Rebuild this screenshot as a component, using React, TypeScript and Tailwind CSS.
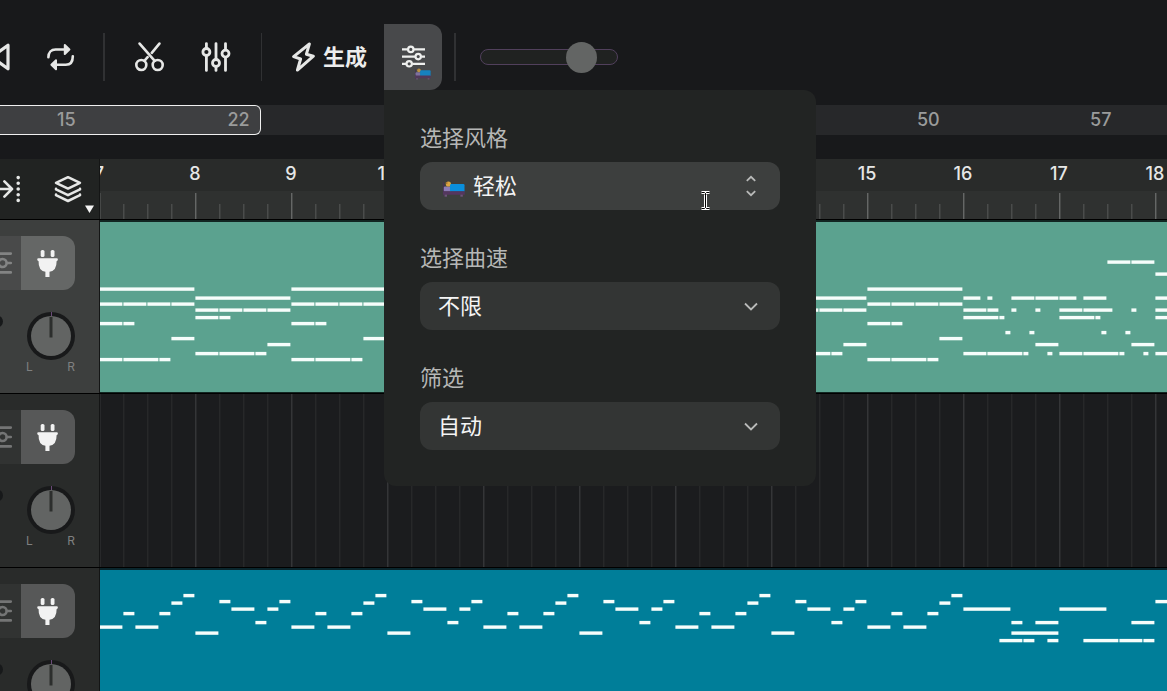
import type { ReactNode } from "react";

type Note = [row: number, start: number, end: number];

const BAR = 96;
const BEATS = [0, 24, 48, 72];

const quarters = (y: number): Note[] => BEATS.map((b) => [y, b, b + 23]);

const barA: Note[] = [
  [69, 0, 95],
  ...quarters(84),
  [103.5, 0, 23], [103.5, 24, 35],
  [118.5, 72, 95],
  [139.5, 0, 23], [139.5, 24, 59], [139.5, 60, 71],
];

const barB: Note[] = [
  [78, 0, 95],
  ...quarters(90),
  [97.5, 0, 23], [97.5, 24, 35],
  [124.5, 72, 95],
  [133.5, 0, 23], [133.5, 24, 59], [133.5, 60, 71],
];

const barC: Note[] = [
  [78, 0, 17], [78, 24, 29], [78, 48, 71], [78, 72, 95],
  [90, 0, 23], [90, 24, 35], [90, 48, 53], [90, 72, 77],
  [97.5, 0, 35], [97.5, 36, 41],
  [112.5, 42, 47], [112.5, 66, 71],
  [124.5, 72, 95],
  [133.5, 0, 23], [133.5, 24, 59], [133.5, 60, 65], [133.5, 84, 89],
];

const barD: Note[] = [
  [42, 48, 71], [42, 72, 95],
  [78, 0, 17], [78, 24, 47],
  [90, 0, 23], [90, 24, 53], [90, 72, 77],
  [97.5, 0, 35], [97.5, 36, 41],
  [112.5, 42, 47], [112.5, 66, 71],
  [124.5, 72, 95],
  [133.5, 0, 23], [133.5, 24, 59], [133.5, 60, 65], [133.5, 84, 89],
];

const barE: Note[] = [[54, 0, 23], [78, 0, 95], [90, 0, 23], [97.5, 0, 23], [133.5, 0, 23]];

const melodyA: Note[] = [
  [59, 0, 23], [45.5, 24, 35], [59, 36, 59], [45.5, 60, 71], [35, 72, 83], [27.5, 84, 95],
];
const melodyB: Note[] = [
  [65, 0, 23], [33.5, 24, 35], [41, 36, 59], [54.5, 60, 71], [41, 72, 83], [33.5, 84, 95],
];
const melodyC: Note[] = [
  [41, 0, 47],
  [54.5, 48, 59], [54.5, 72, 95],
  [65, 48, 95],
  [72.5, 36, 59], [72.5, 60, 71], [72.5, 84, 95],
];
const melodyD: Note[] = [
  [41, 0, 47], [54.5, 72, 95], [72.5, 24, 59], [72.5, 60, 83], [72.5, 84, 95],
];
const melodyE: Note[] = [[33.5, 0, 23]];

const chordBars = [barA, barB, barA, barB, barA, barB, barA, barB, barA, barC, barD, barE];
const melodyBars = [
  melodyA, melodyB, melodyA, melodyB, melodyA, melodyB, melodyA, melodyB, melodyA,
  melodyC, melodyD, melodyE,
];

function Clip({ bars, color }: { bars: Note[][]; color: string }) {
  return (
    <div className={`h-[170px] overflow-hidden ${color}`}>
      <svg className="block h-full w-full" aria-hidden="true">
        {bars.map((bar, i) =>
          bar.map(([y, start, end], j) => (
            <rect key={`${i}-${j}`} x={i * BAR + start - 0.6} y={y - 3.6} width={end - start} height="3.4" fill="#f6fdfb" />
          )),
        )}
      </svg>
    </div>
  );
}

function LaneGrid() {
  return (
    <svg className="block h-full w-full" aria-hidden="true">
      <defs>
        <pattern id="lane-grid" x="-1" width="96" height="8" patternUnits="userSpaceOnUse">
          <rect x="0" width="1" height="8" fill="#343537" />
          <rect x="1" width="1" height="8" fill="#27282a" />
          <rect x="24" width="1" height="8" fill="#272829" />
          <rect x="25" width="1" height="8" fill="#202123" />
          <rect x="48" width="1" height="8" fill="#272829" />
          <rect x="49" width="1" height="8" fill="#202123" />
          <rect x="72" width="1" height="8" fill="#272829" />
          <rect x="73" width="1" height="8" fill="#202123" />
        </pattern>
      </defs>
      <rect width="100%" height="100%" fill="url(#lane-grid)" />
    </svg>
  );
}

function RulerTicks() {
  return (
    <svg className="block h-7 w-full" aria-hidden="true">
      <defs>
        <pattern id="ruler-ticks" x="-1" width="96" height="28" patternUnits="userSpaceOnUse">
          <rect x="0" y="2" width="1" height="26" fill="#656766" />
          <rect x="1" y="2" width="1" height="26" fill="#464847" />
          <rect x="24" y="13" width="1" height="15" fill="#4a4c4b" />
          <rect x="25" y="13" width="1" height="15" fill="#3c3e3d" />
          <rect x="48" y="13" width="1" height="15" fill="#4a4c4b" />
          <rect x="49" y="13" width="1" height="15" fill="#3c3e3d" />
          <rect x="72" y="13" width="1" height="15" fill="#4a4c4b" />
          <rect x="73" y="13" width="1" height="15" fill="#3c3e3d" />
        </pattern>
      </defs>
      <rect width="100%" height="28" fill="url(#ruler-ticks)" />
    </svg>
  );
}

function BedIcon({ className }: { className: string }) {
  return (
    <svg viewBox="0 0 22 16" className={className} aria-hidden="true">
      <rect x="0" y="1.5" width="1" height="13" fill="#463052" />
      <rect x="0.8" y="5.6" width="7" height="5" rx="1.2" fill="#8b7cb6" />
      <circle cx="5.4" cy="3" r="2.6" fill="#d9a441" />
      <circle cx="3.6" cy="2" r="1" fill="#a5752f" />
      <path d="M7 4.4Q7 3 8.4 3H20.4Q21.5 3 21.5 4.2V10.6H7Z" fill="#0a8fdd" />
      <rect x="0" y="10.2" width="21.8" height="3.6" rx="0.6" fill="#54365f" />
      <rect x="1.6" y="13.6" width="2.4" height="2.1" fill="#6d5279" />
      <rect x="17.4" y="13.6" width="2.4" height="2.1" fill="#6d5279" />
    </svg>
  );
}

function ToolButton({ label, children }: { label: string; children: ReactNode }) {
  return (
    <button type="button" aria-label={label} className="flex h-[66px] w-[30px] shrink-0 items-center justify-center">
      {children}
    </button>
  );
}

function Divider({ className }: { className: string }) {
  return <div className={`h-12 shrink-0 bg-[#303133] ${className}`} />;
}

function SelectField({ id, label, value, active = false }: { id: string; label: string; value: string; active?: boolean }) {
  return (
    <div className="flex flex-col gap-3">
      <label htmlFor={id} className="text-[22px] leading-6 text-[#b6b7b6]">
        {label}
      </label>
      <div className="relative">
        <select
          id={id}
          className={`block h-12 w-full appearance-none rounded-xl text-[22px] text-[#f4f4f4] outline-none ${
            active ? "bg-[#3d3f3e] pl-[53px]" : "bg-[#333534] pl-[18px]"
          }`}
        >
          <option>{value}</option>
        </select>
        {active && <BedIcon className="pointer-events-none absolute top-[19px] left-[23px] h-4 w-[22px]" />}
        <svg
          viewBox="0 0 24 24"
          fill="none"
          stroke="#b9bab9"
          strokeWidth="1.8"
          className="pointer-events-none absolute top-3 right-[17px] size-6"
          aria-hidden="true"
        >
          {active ? <path d="M7.8 6.8 12 2.8l4.2 4M7.8 17.2l4.2 4 4.2-4" /> : <path d="m6 9.5 6 6 6-6" />}
        </svg>
      </div>
    </div>
  );
}

function Toolbar() {
  return (
    <div className="flex h-[105px] shrink-0 items-center pt-6 pb-[15px]">
      <button type="button" aria-label="后退" className="flex h-[66px] w-[10px] shrink-0 items-center">
        <svg viewBox="0 0 10 30" className="h-[30px] w-[10px]" fill="none" stroke="#e6e7e6" strokeWidth="3.2" strokeLinejoin="round" aria-hidden="true">
          <path d="M8 3.2V26.8L-8 15Z" />
        </svg>
      </button>
      <div className="flex pr-[27px] pl-9">
        <ToolButton label="循环">
          <svg viewBox="0 0 30 30" className="size-[30px]" fill="none" stroke="#e6e7e6" strokeWidth="2.6" strokeLinecap="round" aria-hidden="true">
            <path d="M2.4 15.2C2.4 10.4 5.2 7.5 9.6 7.5H19M26.8 14.2C26.8 20.2 24 22.8 19.8 22.8H10" />
            <path d="M18.8 3 23.4 7.5 18.8 12ZM10 18.3 5.4 22.8 10 27.3Z" fill="#e6e7e6" strokeLinejoin="round" strokeWidth="2" />
          </svg>
        </ToolButton>
      </div>
      <Divider className="w-0.5" />
      <div className="flex gap-9 px-[30px]">
        <ToolButton label="剪切">
          <svg viewBox="0 0 30 30" className="size-[30px]" fill="none" stroke="#e6e7e6" strokeWidth="2.6" strokeLinecap="round" aria-hidden="true">
            <circle cx="6.3" cy="23" r="5" />
            <circle cx="22.7" cy="23" r="5" />
            <path d="M4.6 1.6 19.7 18.8M24.4 1.6 16.8 10.8M12.6 15.2 9.4 18.8" />
          </svg>
        </ToolButton>
        <ToolButton label="混音">
          <svg viewBox="0 0 30 30" className="size-[30px]" fill="none" stroke="#e6e7e6" strokeWidth="2.8" strokeLinecap="round" aria-hidden="true">
            <path d="M5.4 1.6V6.2M5.4 13.8V28.4M15 1.6V17.2M15 24.8V28.4M24.5 1.6V7.8M24.5 15.4V28.4" />
            <circle cx="5.4" cy="10" r="3.5" />
            <circle cx="15" cy="21" r="3.5" />
            <circle cx="24.5" cy="11.6" r="3.5" />
          </svg>
        </ToolButton>
      </div>
      <Divider className="w-px" />
      <button type="button" className="flex h-[66px] shrink-0 items-center gap-[5px] pr-[17px] pl-[26px]">
        <svg viewBox="0 0 30 30" className="size-[30px]" fill="none" stroke="#e6e7e6" strokeWidth="3" strokeLinejoin="round" aria-hidden="true">
          <path d="M21.4 1.9 5.6 14.6 12.6 17 9.4 28.1 25.4 14.2 18.4 12.2Z" />
        </svg>
        <span className="text-[22px] leading-6 font-bold text-[#ececec]">生成</span>
      </button>
      <div className="relative z-10 shrink-0">
        <button type="button" aria-label="生成设置" aria-expanded="true" className="relative block h-[66px] w-[58px] rounded-r-xl bg-[#48494b]">
          <svg viewBox="0 0 58 66" className="h-full w-full" fill="none" stroke="#eeefee" strokeWidth="2.2" aria-hidden="true">
            <path d="M18 25.4H24M30 25.4H41M18 32.6H31.4M37.4 32.6H41M18 39.8H22.4M28.4 39.8H41" />
            <circle cx="26.8" cy="25.4" r="2.7" />
            <circle cx="34.2" cy="32.6" r="2.7" />
            <circle cx="25.2" cy="39.8" r="2.7" />
          </svg>
          <BedIcon className="absolute right-[11px] bottom-[10px] h-3 w-4 opacity-80" />
        </button>
        <div className="absolute top-full left-0 flex w-[432px] flex-col gap-9 rounded-xl rounded-tl-none bg-[#222423] p-9">
          <SelectField id="style" label="选择风格" value="轻松" active />
          <SelectField id="tempo" label="选择曲速" value="不限" />
          <SelectField id="filter" label="筛选" value="自动" />
          <svg viewBox="0 0 11 19" className="pointer-events-none absolute top-[101px] left-[316px] h-[19px] w-[11px]" fill="none" aria-hidden="true">
            <path d="M1.5 1.5H4.5L5.5 2.5 6.5 1.5H9.5M5.5 2.5V16.5M1.5 17.5H4.5L5.5 16.5 6.5 17.5H9.5" stroke="#ffffff" strokeWidth="3" />
            <path d="M1.5 1.5H4.5L5.5 2.5 6.5 1.5H9.5M5.5 2.5V16.5M1.5 17.5H4.5L5.5 16.5 6.5 17.5H9.5" stroke="#000000" strokeWidth="1" />
          </svg>
        </div>
      </div>
      <div className="flex items-center gap-6 pl-3">
        <Divider className="w-0.5" />
        <input
          type="range"
          aria-label="音量"
          defaultValue={81}
          className="h-[31px] w-[138px] appearance-none bg-transparent [&::-webkit-slider-runnable-track]:h-4 [&::-webkit-slider-runnable-track]:rounded-full [&::-webkit-slider-runnable-track]:border [&::-webkit-slider-runnable-track]:border-[#51405c] [&::-webkit-slider-runnable-track]:bg-[#202221] [&::-webkit-slider-thumb]:-mt-2 [&::-webkit-slider-thumb]:size-[31px] [&::-webkit-slider-thumb]:appearance-none [&::-webkit-slider-thumb]:rounded-full [&::-webkit-slider-thumb]:bg-[#636564]"
        />
      </div>
    </div>
  );
}

function Overview() {
  return (
    <div className="relative h-[30px] shrink-0 overflow-hidden bg-[#27282a]">
      <div className="absolute inset-y-0 left-0 w-[261px] rounded-r-md border border-l-0 border-[#f0f0f0] bg-[#3e3f41]" />
      <div className="relative -ml-5 flex h-full w-[calc(100%+40px)] items-center text-center text-lg font-medium text-[#9a9b9b]">
        {[15, 22, 29, 36, 43, 50, 57].map((n) => (
          <span key={n} className="flex-1">{n}</span>
        ))}
      </div>
    </div>
  );
}

function RulerRow() {
  return (
    <div className="mt-6 flex h-[61px] shrink-0 border-b border-black">
      <div className="flex w-[100px] shrink-0 border-r border-[#141515] bg-[#212322]">
        <button type="button" aria-label="跟随播放" className="h-full w-[30px]">
          <svg viewBox="0 0 30 60" className="h-full w-full" fill="none" stroke="#e6e7e6" strokeWidth="2.6" strokeLinecap="round" strokeLinejoin="round" aria-hidden="true">
            <path d="M-2 30H12M4.4 22.4 12 30 4.4 37.6" />
            <path d="M18.2 18.6V41.6" strokeWidth="3.6" strokeDasharray="0 5.7" />
          </svg>
        </button>
        <button type="button" aria-label="轨道图层" className="h-full flex-1">
          <svg viewBox="0 0 69 60" className="h-full w-full" fill="none" stroke="#e6e7e6" strokeWidth="2.5" strokeLinecap="round" strokeLinejoin="round" aria-hidden="true">
            <path d="M38 18.2 50 23.8 38 29.6 26 23.8Z" />
            <path d="M26 29.8V30.4L38 36.2 50 30.4V29.8M26 35.6V36.2L38 42 50 36.2V35.6" />
            <path d="M55 46.5H64L59.5 54Z" fill="#f4f4f4" stroke="none" />
          </svg>
        </button>
      </div>
      <div className="min-w-0 flex-1 overflow-hidden bg-[#2f3130]">
        <div className="h-8 bg-[#292b2a]">
          <div className="-ml-[49px] flex text-center text-lg leading-[30px] font-medium text-[#e6e7e6]">
            {[7, 8, 9, 10, 11, 12, 13, 14, 15, 16, 17, 18].map((n) => (
              <span key={n} className="w-24 shrink-0">{n}</span>
            ))}
          </div>
        </div>
        <RulerTicks />
      </div>
    </div>
  );
}

function Track({ selected = false, children }: { selected?: boolean; children: ReactNode }) {
  return (
    <div className="flex h-[174px] shrink-0 border-b border-black">
      <div className={`w-[100px] shrink-0 border-r border-[#141515] pt-4 ${selected ? "bg-[#3d3f3e]" : "bg-[#292b2a]"}`}>
        <div className="flex h-[54px]">
          <button type="button" aria-label="轨道设置" className={`w-[21px] ${selected ? "bg-[#494a4a]" : "bg-[#313332]"}`}>
            <svg viewBox="0 0 21 54" className="h-full w-full" fill="none" stroke={selected ? "#838484" : "#747575"} strokeWidth="2.6" strokeLinecap="round" aria-hidden="true">
              <path d="M-2 17.6H10.8M-2 36.4H10.8M7 27H10.8" />
              <circle cx="2.6" cy="27" r="4" />
            </svg>
          </button>
          <button type="button" aria-label="插件" className={`w-[54px] rounded-r-xl ${selected ? "bg-[#656766]" : "bg-[#575858]"}`}>
            <svg viewBox="0 0 54 54" className="h-full w-full" fill="#f2f2f2" aria-hidden="true">
              <rect x="19.7" y="14" width="3.8" height="7" rx="1.6" />
              <rect x="29.7" y="14" width="3.8" height="7" rx="1.6" />
              <path d="M17.4 22.2H35.8Q36.9 22.2 36.9 23.6T35.6 25.2Q35.8 34.6 28.5 35.8V41H24.4V35.8Q17.2 34.6 17.6 25.2 16.2 25 16.2 23.6T17.4 22.2Z" />
            </svg>
          </button>
        </div>
        <svg viewBox="0 0 99 48" className="mt-[22px] block h-12 w-[99px]" aria-hidden="true">
          <circle cx="-3" cy="9.5" r="6" fill="#17191a" />
          <circle cx="51" cy="24" r="24" fill="#18191a" />
          <circle cx="51" cy="24" r="20" fill="#626463" />
          <path d="M51 5V25.5" stroke="#2c2e2d" strokeWidth="3" />
          <path d="M51.5 0V4" stroke="#6a4a78" strokeWidth="1" />
        </svg>
        <div className="flex justify-between pr-6 pl-[26px] text-xs leading-[14px] text-[#7f8080]">
          <span>L</span>
          <span>R</span>
        </div>
      </div>
      <div className="min-w-0 flex-1 overflow-hidden bg-[#1b1c1e]">{children}</div>
    </div>
  );
}

export default function App() {
  return (
    <main className="flex h-screen flex-col overflow-hidden bg-[#18191b] font-['Inter','Noto_Sans_CJK_SC',sans-serif] select-none">
      <Toolbar />
      <Overview />
      <RulerRow />
      <Track selected>
        <div className="h-full bg-[#122622] pt-0.5">
          <Clip bars={chordBars} color="bg-[#5ba28f]" />
        </div>
      </Track>
      <Track>
        <LaneGrid />
      </Track>
      <Track>
        <div className="h-full bg-[#09262d] pt-0.5">
          <Clip bars={melodyBars} color="bg-[#007e99]" />
        </div>
      </Track>
    </main>
  );
}
